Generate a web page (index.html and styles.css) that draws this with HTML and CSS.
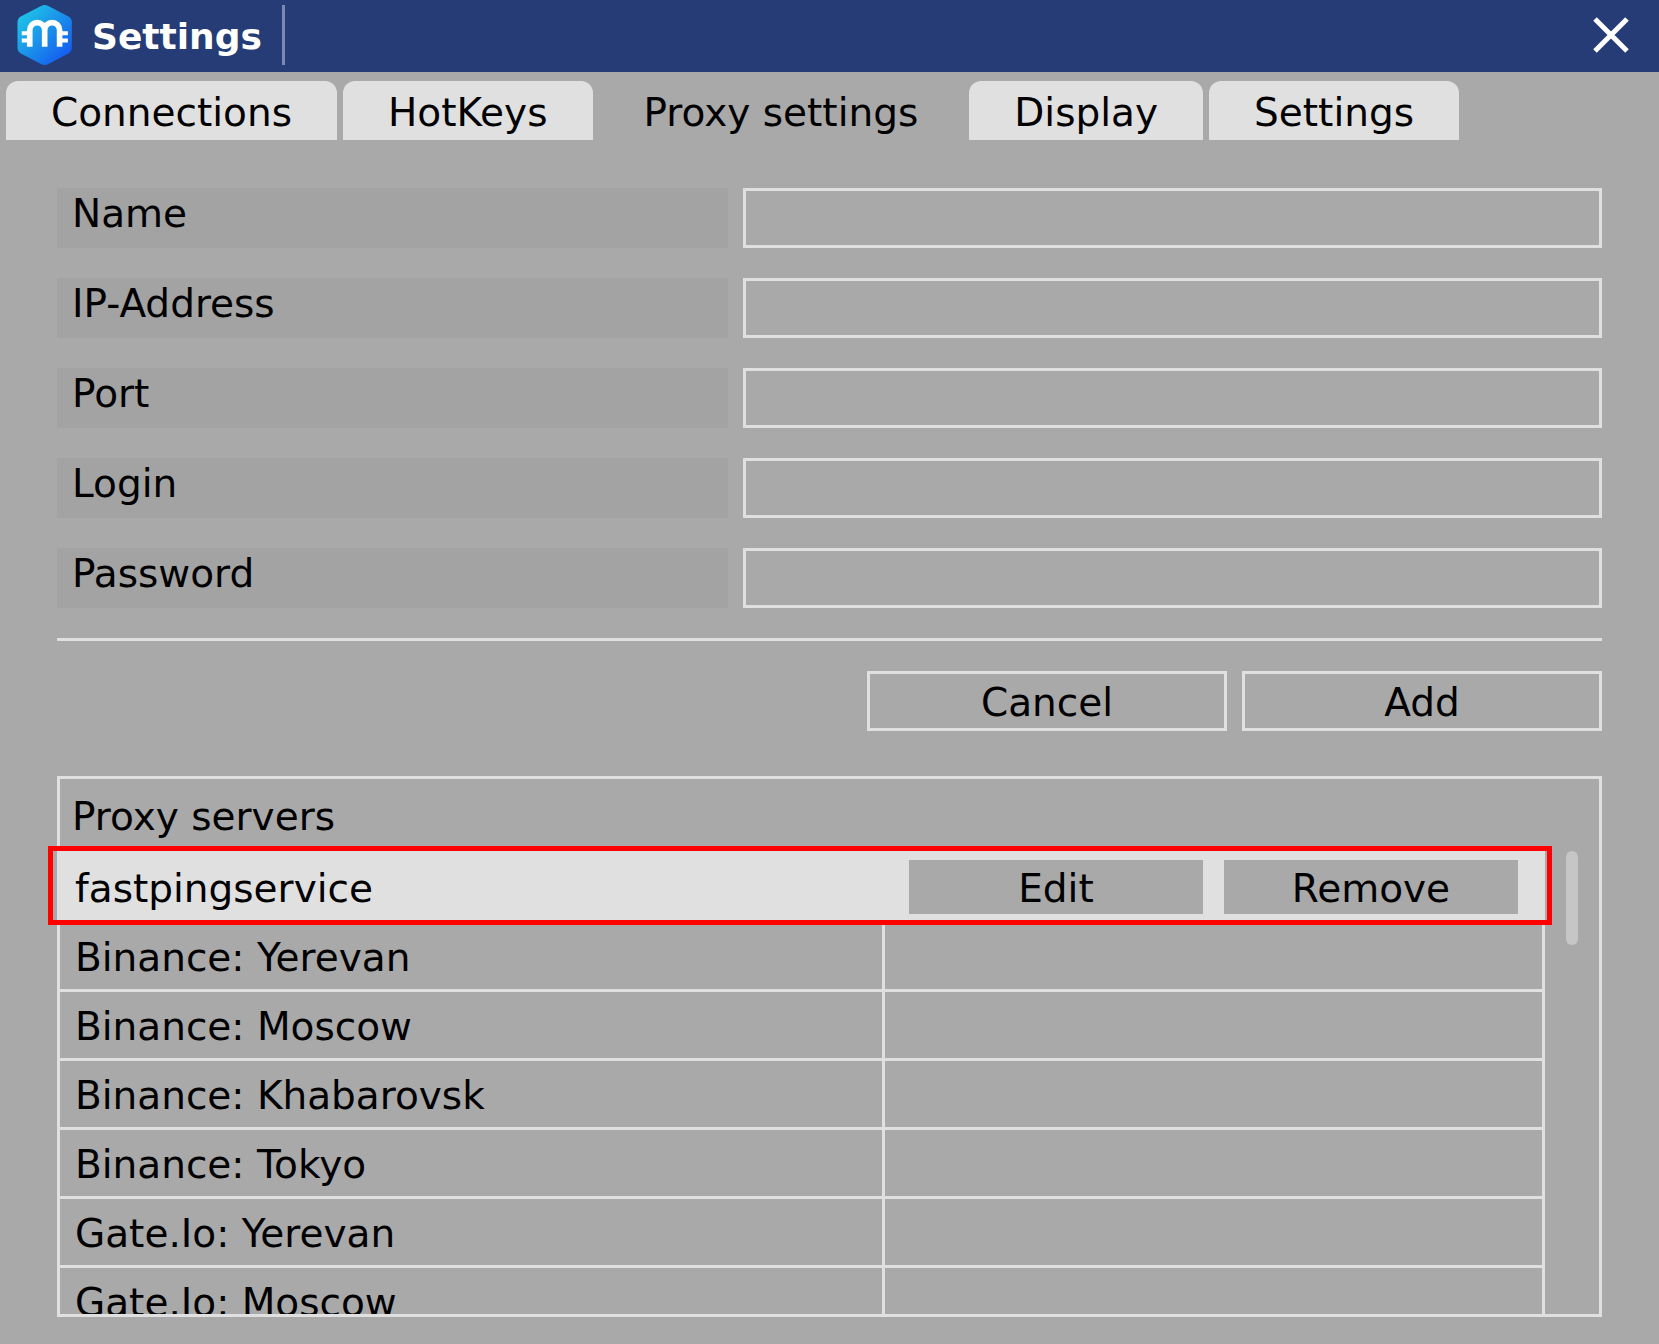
FILE: index.html
```html
<!DOCTYPE html>
<html lang="en">
<head>
    <meta charset="UTF-8">
    <meta name="viewport" content="width=device-width, initial-scale=1.0">
    <title>Settings</title>
    <link rel="stylesheet" href="styles.css">
</head>
<body>
    <header class="titlebar">
        <svg class="logo" viewBox="51 12 165 181" aria-hidden="true">
            <defs>
                <linearGradient id="logo-fill" x1="0" y1="0" x2="1" y2="1">
                    <stop offset="0.1" stop-color="#1fc4e8"/>
                    <stop offset="0.5" stop-color="#1a90ea"/>
                    <stop offset="0.85" stop-color="#1560f0"/>
                </linearGradient>
            </defs>
            <path fill="url(#logo-fill)" d="M123 15Q134 9 145 15L206 47Q216 53 216 65V140Q216 152 206 158L145 190Q134 196 123 190L62 158Q52 152 52 140V65Q52 53 62 47Z"/>
            <path fill="none" stroke="#fff" stroke-width="17" d="M89 138V88A22.5 23 0 0 1 134 88V138M134 88A22.5 23 0 0 1 179 88V138"/>
            <path fill="none" stroke="#fff" stroke-width="12" d="M65 97H89M65 119H89M179 97H204M179 119H204"/>
        </svg>
        <h1>Settings</h1>
        <span class="divider"></span>
        <button class="close" type="button" aria-label="Close">
            <svg viewBox="0 0 36 36" aria-hidden="true">
                <path fill="none" stroke="#fff" stroke-width="5" d="M2 2L34 34M34 2L2 34"/>
            </svg>
        </button>
    </header>

    <nav class="tabs">
        <button type="button">Connections</button>
        <button type="button">HotKeys</button>
        <button type="button" class="active">Proxy settings</button>
        <button type="button">Display</button>
        <button type="button">Settings</button>
    </nav>

    <main>
        <form class="proxy-form">
            <div class="field">
                <label for="name">Name</label>
                <input type="text" id="name">
            </div>
            <div class="field">
                <label for="ip">IP-Address</label>
                <input type="text" id="ip">
            </div>
            <div class="field">
                <label for="port">Port</label>
                <input type="text" id="port">
            </div>
            <div class="field">
                <label for="login">Login</label>
                <input type="text" id="login">
            </div>
            <div class="field">
                <label for="password">Password</label>
                <input type="password" id="password">
            </div>
            <div class="actions">
                <button type="reset">Cancel</button>
                <button type="button">Add</button>
            </div>
        </form>

        <section class="servers">
            <h2>Proxy servers</h2>
            <div class="list">
                <table>
                    <tr class="selected">
                        <td>fastpingservice</td>
                        <td>
                            <div class="row-actions">
                                <button type="button">Edit</button>
                                <button type="button">Remove</button>
                            </div>
                        </td>
                    </tr>
                    <tr><td>Binance: Yerevan</td><td></td></tr>
                    <tr><td>Binance: Moscow</td><td></td></tr>
                    <tr><td>Binance: Khabarovsk</td><td></td></tr>
                    <tr><td>Binance: Tokyo</td><td></td></tr>
                    <tr><td>Gate.Io: Yerevan</td><td></td></tr>
                    <tr><td>Gate.Io: Moscow</td><td></td></tr>
                </table>
                <div class="scrollbar"><div class="thumb"></div></div>
            </div>
            <div class="highlight"></div>
        </section>
    </main>
</body>
</html>
```

FILE: styles.css
```css
* {
    box-sizing: border-box;
}
body {
    margin: 0;
    height: 100vh;
    display: flex;
    flex-direction: column;
    background: #a9a9a9;
    color: #000;
    font-family: "DejaVu Sans", Verdana, sans-serif;
    font-size: 39px;
}
button,
input {
    font: inherit;
    color: inherit;
}
button {
    padding: 3px 0 0;
    border: none;
    cursor: pointer;
}

/* Title bar */
.titlebar {
    display: flex;
    align-items: center;
    height: 72px;
    flex-shrink: 0;
    padding: 0 30px 3px 17px;
    background: #263c76;
    color: #fff;
}
.logo {
    width: 55px;
    height: 60px;
}
h1 {
    margin: 0 20px;
    padding-top: 4px;
    font-size: 36px;
    line-height: 44px;
}
.divider {
    width: 3px;
    height: 60px;
    background: #7c87b2;
}
.close {
    margin-left: auto;
    padding: 0;
    width: 36px;
    height: 36px;
    background: none;
}
.close svg {
    display: block;
}

/* Tabs */
.tabs {
    display: flex;
    gap: 6px;
    flex-shrink: 0;
    padding: 9px 6px 0;
}
.tabs button {
    height: 59px;
    padding: 3px 45px 0;
    background: #e0e0e0;
    border-radius: 12px 12px 0 0;
}
.tabs .active {
    background: none;
}

/* Form */
main {
    flex: 1;
    min-height: 0;
    display: flex;
    flex-direction: column;
    gap: 45px;
    padding: 48px 57px 27px;
}
.proxy-form {
    display: flex;
    flex-direction: column;
    gap: 30px;
}
.field {
    display: grid;
    grid-template-columns: 671fr 859fr;
    gap: 15px;
    height: 60px;
}
.field label {
    padding-left: 15px;
    background: #a3a3a3;
    line-height: 52px;
}
.field input {
    width: 100%;
    padding: 0 12px;
    border: 3px solid #e0e0e0;
    border-radius: 0;
    background: none;
}
.actions {
    display: flex;
    justify-content: flex-end;
    gap: 15px;
    padding-top: 30px;
    border-top: 3px solid #e0e0e0;
}
.actions button {
    width: 360px;
    height: 60px;
    border: 3px solid #e0e0e0;
    background: none;
}

/* Server list */
.servers {
    position: relative;
    flex: 1;
    min-height: 0;
    display: flex;
    flex-direction: column;
    border: 3px solid #e0e0e0;
}
h2 {
    flex-shrink: 0;
    margin: 0;
    padding: 4px 12px 0;
    font-size: 39px;
    font-weight: normal;
    line-height: 68px;
}
.list {
    flex: 1;
    min-height: 0;
    display: flex;
    align-items: flex-start;
    overflow: hidden;
}
table {
    flex: 1;
    table-layout: fixed;
    border-collapse: separate;
    border-spacing: 0;
}
td {
    height: 69px;
    padding: 3px 15px 0;
    border-right: 3px solid #e0e0e0;
    border-bottom: 3px solid #e0e0e0;
}
td:first-child {
    width: 55.55%;
}
.selected td {
    height: 72px;
    padding-top: 6px;
    background: #e0e0e0;
}
.selected td:last-child {
    padding: 9px 24px 6px;
}
.row-actions {
    display: flex;
    gap: 21px;
}
.row-actions button {
    flex: 1;
    height: 54px;
    background: #a9a9a9;
}
.scrollbar {
    width: 54px;
    padding: 0 21px;
}
.thumb {
    height: 94px;
    border-radius: 6px;
    background: #c6c6c6;
}

/* Red frame over the selected server */
.highlight {
    position: absolute;
    top: 67px;
    left: -12px;
    right: 47px;
    height: 79px;
    border: 5px solid #f00;
    pointer-events: none;
}
```
